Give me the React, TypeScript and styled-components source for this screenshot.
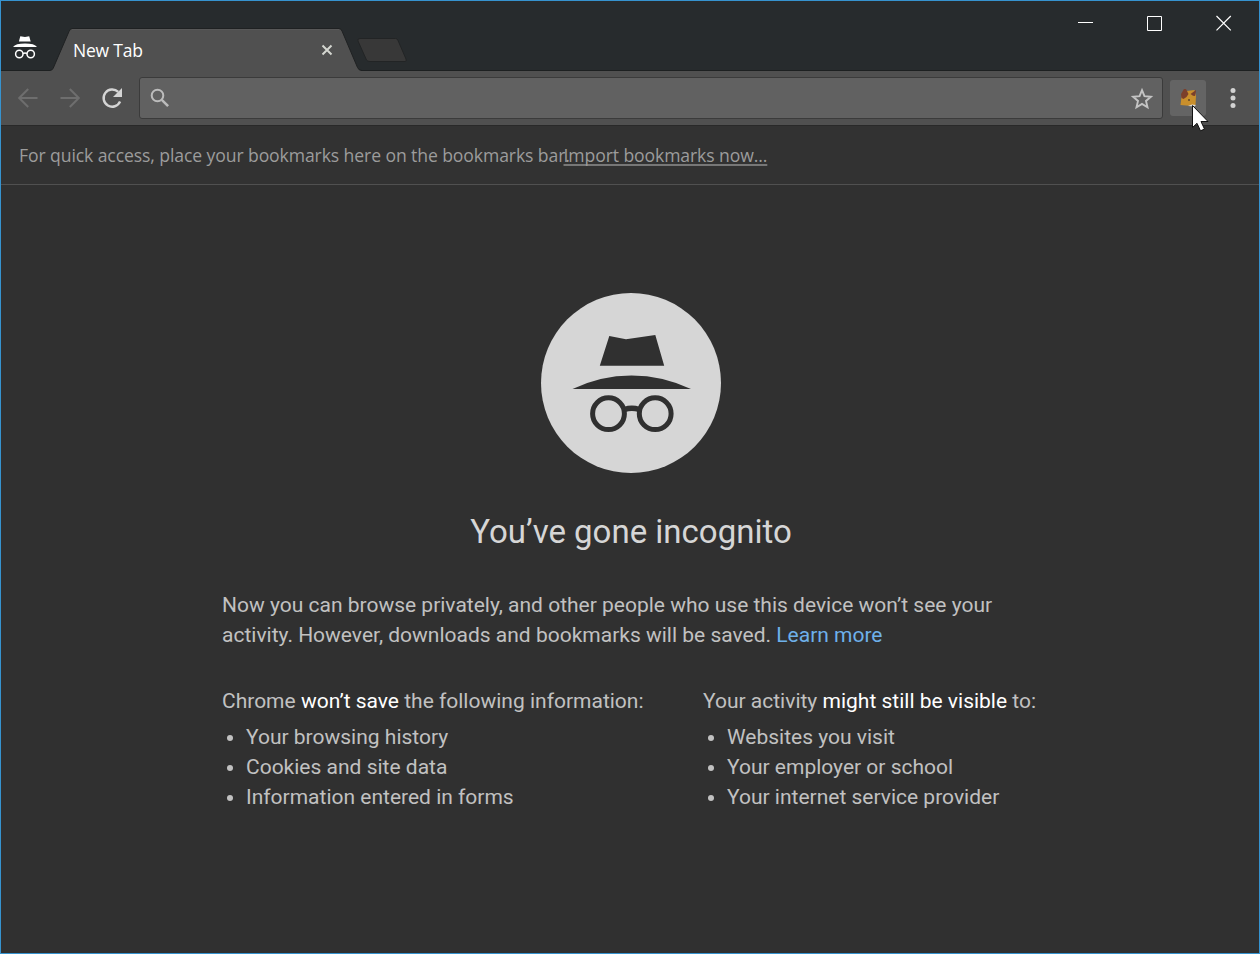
import React from 'react';
import styled, { createGlobalStyle } from 'styled-components';

const GlobalStyle = createGlobalStyle`
  * { box-sizing: border-box; }
  html, body { margin: 0; padding: 0; background: #303030; overflow: hidden; }
`;

const uiFont = `'Open Sans', 'Noto Sans', sans-serif`;

const Window = styled.div`
  position: relative;
  display: flex;
  flex-direction: column;
  width: 1260px;
  height: 954px;
  border: 1px solid #3693cf;
  background: #303030;
  font-family: Roboto, sans-serif;
`;

const TitleBar = styled.header`
  display: flex;
  height: 70px;
  flex: none;
  background: #272b2d;
  border-bottom: 1px solid #1d2021;
`;

const IncognitoBadge = styled.div`
  width: 49px;
  padding: 34px 0 0 11px;
  svg { display: block; }
`;

const Tab = styled.div`
  position: relative;
  z-index: 1;
  display: flex;
  align-items: center;
  width: 312px;
  height: 43px;
  margin-top: 27px;
  padding: 0 29px 0 23px;
`;

const TabShape = styled.svg`
  position: absolute;
  inset: 0;
`;

const TabTitle = styled.span`
  position: relative;
  flex: 1;
  font: 17.5px/24px ${uiFont};
  letter-spacing: -0.2px;
  color: #fff;
`;

const TabClose = styled.svg`
  position: relative;
  display: block;
`;

const NewTabButton = styled.svg`
  display: block;
  margin: 36px 0 0 -6px;
`;

const WindowControls = styled.div`
  display: flex;
  margin-left: auto;
  height: 45px;
`;

const ControlButton = styled.div`
  width: 69px;
  padding: 14px 0 0 26px;
  svg { display: block; }
`;

const Toolbar = styled.nav`
  display: flex;
  flex: none;
  height: 55px;
  background: #505050;
  border-bottom: 1px solid #292929;
`;

const NavButton = styled.div`
  display: flex;
  justify-content: center;
  width: 42px;
  padding-top: 15px;
`;

const NavGroup = styled.div`
  display: flex;
  width: 138px;
  padding-left: 6px;
`;

const Omnibox = styled.div`
  display: flex;
  justify-content: space-between;
  width: 1024px;
  height: 42px;
  margin-top: 6px;
  padding: 9px 8px 0 9px;
  background: #616161;
  border: 1px solid #3b3b3b;
  border-radius: 3px;
`;

const ExtensionButton = styled.div`
  width: 36px;
  height: 36px;
  margin: 9px 0 0 7px;
  border-radius: 3px;
  background: #646464;
  svg { display: block; }
`;

const MenuButton = styled.div`
  margin: 15px 0 0 21px;
  svg { display: block; }
`;

const BookmarksBar = styled.div`
  display: flex;
  flex: none;
  height: 59px;
  padding: 17px 0 0 18px;
  background: #323232;
  border-bottom: 1px solid #505050;
  font: 17.6px/24px ${uiFont};
  color: #9c9c9c;
  white-space: nowrap;
`;

const BookmarksHint = styled.span`
  width: 544.5px;
  letter-spacing: -0.1px;
`;

const ImportLink = styled.a`
  letter-spacing: -0.1px;
  text-decoration: underline;
  text-decoration-thickness: 2px;
  text-decoration-color: #777;
  text-underline-offset: 2px;
  text-decoration-skip-ink: none;
`;

const Page = styled.main`
  display: flex;
  flex-direction: column;
  width: 818px;
  margin: 108px 0 0 221px;
  font-size: 21px;
  line-height: 30px;
  color: #c1c1c1;
`;

const Emblem = styled.svg`
  display: block;
  align-self: center;
`;

const Heading = styled.h1`
  margin: 38px 0 0;
  font-size: 33px;
  line-height: 42px;
  font-weight: 400;
  text-align: center;
  color: #d6d6d6;
`;

const Intro = styled.p`
  margin: 37px 0 0;
  white-space: nowrap;
`;

const LearnMore = styled.a`
  color: #6eb0ea;
`;

const Columns = styled.div`
  display: flex;
  margin-top: 36px;
`;

const Column = styled.section<{ $width: number }>`
  width: ${p => p.$width}px;
  white-space: nowrap;
`;

const Strong = styled.span`
  color: #fff;
`;

const List = styled.ul`
  margin: 6px 0 0;
  padding: 0 0 0 24px;
`;

const sections = [
  { width: 481, before: 'Chrome ', strong: 'won’t save', after: ' the following information:', items: ['Your browsing history', 'Cookies and site data', 'Information entered in forms'] },
  { width: 337, before: 'Your activity ', strong: 'might still be visible', after: ' to:', items: ['Websites you visit', 'Your employer or school', 'Your internet service provider'] },
];

const Pointer = styled.svg`
  position: absolute;
  left: 1190px;
  top: 103px;
`;

export default function App() {
  return (
    <Window>
      <GlobalStyle />
      <TitleBar>
        <IncognitoBadge>
          <svg width="26" height="26" viewBox="12 35 26 26">
            <path d="M20.3 36.2l4.7.8 4.2-.8 1.5 5.2H18.9z" fill="#fff" />
            <path d="M13 47q2.500-3.400 12-3.400t12 3.400z" fill="#fff" />
            <g fill="none" stroke="#fff" strokeWidth="1.5">
              <circle cx="19.300" cy="54" r="3.700" />
              <circle cx="30.700" cy="54" r="3.700" />
              <path d="M23 53.500q2-.8 4 0" />
            </g>
          </svg>
        </IncognitoBadge>
        <Tab>
          <TabShape width="312" height="43" viewBox="50 28 312 43">
            <path d="M50 71V70.500Q52.500 70.300 53.300 68L69 31.500Q70.300 28.500 72 28.500H339Q341 28.500 342 31L357.500 67.500Q358.700 70.500 361 70.500V71z" fill="#505050" />
            <path d="M50 70.500Q52.500 70.300 53.300 68L69 31.500Q70.300 28.500 72 28.500H339Q341 28.500 342 31L357.500 67.500Q358.700 70.500 362 70.500" fill="none" stroke="#1f2122" />
            <path d="M72 29.500H339" stroke="#585858" />
          </TabShape>
          <TabTitle>New Tab</TabTitle>
          <TabClose width="12" height="12" viewBox="0 0 12 12">
            <path d="M1.500 1.500l9 9M10.500 1.500l-9 9" stroke="#d4d6d0" strokeWidth="2" />
          </TabClose>
        </Tab>
        <NewTabButton width="52" height="27" viewBox="356 37 52 27">
          <path d="M360 38.500H395.500Q397 38.500 397.800 40L406 59Q407 61.500 405 61.500H370Q367.500 61.500 366.500 60L358 41Q357 38.500 360 38.500z" fill="#383838" stroke="#222425" />
        </NewTabButton>
        <WindowControls>
          <ControlButton>
            <svg width="16" height="16"><path d="M0 7.500h15" stroke="#fff" /></svg>
          </ControlButton>
          <ControlButton>
            <svg width="16" height="16"><path d="M.5 1.500h14v14h-14z" fill="none" stroke="#fff" /></svg>
          </ControlButton>
          <ControlButton>
            <svg width="16" height="16"><path d="M.5 1l14.300 14.300M14.800 1L.5 15.300" stroke="#fff" strokeWidth="1.200" /></svg>
          </ControlButton>
        </WindowControls>
      </TitleBar>

      <Toolbar>
        <NavGroup>
          <NavButton>
            <svg width="24" height="24"><path d="M21.500 12H3.200M12.200 3L3.200 12l9 9" fill="none" stroke="#6e6e6e" strokeWidth="2" /></svg>
          </NavButton>
          <NavButton>
            <svg width="24" height="24"><path d="M2.500 12h18.300M11.800 3l9 9-9 9" fill="none" stroke="#6e6e6e" strokeWidth="2" /></svg>
          </NavButton>
          <NavButton>
            <svg width="24" height="24">
              <path d="M20.100 15.500A8.600 8.600 0 1 1 18.200 5.900" fill="none" stroke="#d4d4d4" strokeWidth="2.400" />
              <path d="M22 2v9h-9z" fill="#d4d4d4" />
            </svg>
          </NavButton>
        </NavGroup>
        <Omnibox>
          <svg width="22" height="22">
            <circle cx="8.500" cy="8.500" r="5.800" fill="none" stroke="#bcbcbc" strokeWidth="2" />
            <path d="M12.800 12.800l6.300 6.300" stroke="#bcbcbc" strokeWidth="2.500" />
          </svg>
          <svg width="24" height="24">
            <path d="M12 3.200l2.450 6 6.450.55-4.900 4.200 1.500 6.300L12 16.900l-5.500 3.350 1.500-6.300-4.900-4.200 6.450-.55z" fill="none" stroke="#c4c4c4" strokeWidth="1.900" />
          </svg>
        </Omnibox>
        <ExtensionButton>
          <svg width="36" height="36" viewBox="0 0 36 36">
            <path d="M10.500 25l1-8 5-6 8-1 1.500 6-.5 9-4 1z" fill="#c98f2c" />
            <path d="M11.500 18l-.5-4 3-5h2l2.500 5-2 3-3 2z" fill="#7b3f2b" />
            <path d="M20.500 14l5.500-4v1l-1 5-2-.2z" fill="#7b3f2b" />
            <circle cx="19" cy="20" r="1" fill="#5d4429" />
            <path d="M18 26l4-1.500 4 .5-1.500 1.500z" fill="#ddd" />
          </svg>
        </ExtensionButton>
        <MenuButton>
          <svg width="12" height="24" fill="#d2d2d2">
            <circle cx="6" cy="4.500" r="2.500" /><circle cx="6" cy="12" r="2.500" /><circle cx="6" cy="19.500" r="2.500" />
          </svg>
        </MenuButton>
      </Toolbar>

      <BookmarksBar>
        <BookmarksHint>For quick access, place your bookmarks here on the bookmarks bar.</BookmarksHint>
        <ImportLink>Import bookmarks now...</ImportLink>
      </BookmarksBar>

      <Page>
        <Emblem width="180" height="180" viewBox="541 293 180 180">
          <circle cx="631" cy="383" r="90" fill="#d6d6d6" />
          <g fill="#303030">
            <path d="M609.300 336l16.700 3.300 29.300-4.300 8.900 30.800h-64.400z" />
            <path d="M572.500 389q28-13.600 59-13.600t59.500 13.600z" />
          </g>
          <g fill="none" stroke="#303030" strokeWidth="5">
            <circle cx="608.500" cy="413.700" r="15.900" />
            <circle cx="655.200" cy="413.700" r="15.900" />
            <path d="M624.500 409.500q7.300-2.600 14.700 0" strokeWidth="5.500" />
          </g>
        </Emblem>
        <Heading>You’ve gone incognito</Heading>
        <Intro>
          Now you can browse privately, and other people who use this device won’t see your<br />
          activity. However, downloads and bookmarks will be saved. <LearnMore>Learn more</LearnMore>
        </Intro>
        <Columns>
          {sections.map(s => (
            <Column key={s.strong} $width={s.width}>
              {s.before}<Strong>{s.strong}</Strong>{s.after}
              <List>{s.items.map(i => <li key={i}>{i}</li>)}</List>
            </Column>
          ))}
        </Columns>
      </Page>

      <Pointer width="20" height="30" viewBox="0 0 20 30">
        <path d="M1.500 1.500v22l4.500-4.200 3.500 7.500 4-1.700-3.500-7.600h7z" fill="#fff" stroke="#111" strokeWidth="1" />
      </Pointer>
    </Window>
  );
}
